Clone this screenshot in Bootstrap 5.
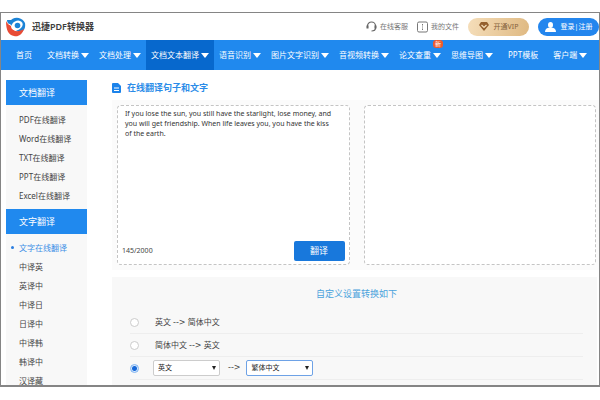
<!DOCTYPE html>
<html lang="zh-CN">
<head>
<meta charset="utf-8">
<meta name="viewport" content="width=device-width, initial-scale=1">
<title>迅捷PDF转换器</title>
<link href="https://cdn.jsdelivr.net/npm/bootstrap@5.3.0/dist/css/bootstrap.min.css" rel="stylesheet">
<style>
body{font-family:"Noto Sans","Noto Sans CJK SC",sans-serif;font-size:8px;line-height:10px;color:#444;background:#fff}
a{color:inherit;text-decoration:none}
svg{display:block;flex:none}
.page-wrap{height:100vh;padding:12px 0 13px}
.frame{border:1px solid #858585;border-bottom-width:2px}
.topbar{height:27px;padding-left:5px}
.brand{font-size:9px;font-weight:600;color:#3d3d3d;gap:6px}
.tool-links{gap:9px;color:#777;font-size:7px}
.tool-links a{gap:3px}
.tool-links .pill{height:18px;border-radius:9px;width:61px;gap:5px}
.tool-links .vip{background:linear-gradient(100deg,#f5deba,#dfb982);color:#85613c}
.tool-links .signin{background:#2386ee;color:#fff;border-radius:9px}
.mainnav{background:#2089ee;color:#fff;height:30px;padding-left:5px}
.mainnav a{padding:0 5px;gap:2px}
.mainnav a.wide{padding:0 10px}
.mainnav a.current{background:#0768cd}
.tri::after{content:"";border:4px solid transparent;border-top:5px solid #fff;border-bottom:0}
.hot{position:absolute;top:0;right:3px;background:#ee5a2c;border-radius:3px;font-size:6px;line-height:8px;padding:0 2px}
.main-row{padding-left:5px;gap:25px}
.side{width:81px;margin-top:10px;background:#f8f8f8}
.side h2{font-size:9px;line-height:25px;font-weight:400;color:#fff;background:#2089ee;padding-left:13px;margin:0}
.side ul{line-height:19px;padding:5px 0 4px 13px}
.side ul.second{padding-top:4px}
.side .chosen{color:#3d8fe6}
.side .chosen::before{content:"";position:absolute;left:-8px;top:8px;width:3px;height:3px;border-radius:50%;background:#2a7de0}
.work{min-width:0}
.work h1{font-size:9px;line-height:12px;font-weight:600;color:#2b8ce8;gap:6px;margin:12px 0 6px}
.panes{background:#fbfbfb;padding:5px 3px 5px 5px;gap:14px}
.pane{border:1px dashed #c4c4c4;border-radius:4px;background:#fff;height:160px}
.pane textarea{border:0;outline:0;resize:none;background:transparent;color:#333;font-size:7px;line-height:10px;padding:3px 14px 0 7px;width:100%}
.count{font-size:7px}
.pane-foot{padding:0 4px 3px}
.go{background:#1878dc;color:#fff;font-size:9px;line-height:20px;width:51px;padding:0;border:0;border-radius:2px}
.options{background:#f8f8f8;margin:7px 2px 0 0;padding:11px 14px 0 18px}
.options h3{font-size:9px;line-height:12px;color:#4ba3dc;font-weight:400;margin:0 0 11px}
.opt{height:23px;border-bottom:1px solid #eee;gap:14px}
.opt .form-check-input{width:9px;height:9px;margin:0;border-color:#ccc;background-image:none;background-color:#fff;box-shadow:none}
.opt .form-check-input:checked{border-color:#7fb4f2;background:radial-gradient(circle,#1668d8 0 2px,#d6e8fd 3px)}
.opt label{padding-left:2px}
.arrow{font-family:"DejaVu Sans",sans-serif;font-size:8px}
.opt .form-select{width:67px;height:16px;font-size:7px;line-height:10px;padding:0 4px;border:1px solid #ccc;border-radius:2px;color:#222;background-color:#fff;background-position:right 3px center;background-size:4px 4px;box-shadow:none;background-image:url("data:image/svg+xml,%3Csvg xmlns='http://www.w3.org/2000/svg' viewBox='0 0 4 4'%3E%3Cpath d='M0 0h4L2 4z' fill='%23222'/%3E%3C/svg%3E")}
.opt .form-select.active-select{border-color:#6ea2e6}
.pair{gap:6px}
</style>
</head>
<body>
<div class="page-wrap">
<div class="frame h-100 overflow-hidden d-flex flex-column">
  <header class="topbar d-flex align-items-center justify-content-between flex-shrink-0">
    <a href="#" class="brand d-flex align-items-center">
      <svg width="20" height="21" viewBox="0 0 20 21"><path d="M1 4 5 4A9 9 0 0 1 19 7C20 13 17 16 13 17L4 8C2 8 1 6 1 4Z" fill="#1c83d6"/><path d="M0 5C2 9 4 9 5 10C6 15 11 17 18 13C16 19 12 21 8 20C3 19 0 15 0 5Z" fill="#e84c36"/><ellipse cx="11" cy="9.500" rx="6" ry="4.500" transform="rotate(-28 11 9.500)" fill="#fff"/><circle cx="11.500" cy="9.500" r="2.800" fill="#1c83d6"/></svg>
      <span>迅捷PDF转换器</span>
    </a>
    <div class="tool-links d-flex align-items-center">
      <a href="#" class="d-flex align-items-center"><svg width="11" height="11" viewBox="0 0 11 11" fill="none" stroke="#666" stroke-width="1.200"><path d="M1.500 7V5a4 4 0 0 1 8 0v2c0 2-1.500 3-4 3"/><path d="M1.500 4.500v3M9.500 4.500v3" stroke-width="2"/></svg>在线客服</a>
      <a href="#" class="d-flex align-items-center"><svg width="11" height="12" viewBox="0 0 11 12" fill="none" stroke="#777"><rect x=".5" y="1" width="10" height="10" rx="1.500"/><path d="M5.500 3v1.500M5.500 5.500v1M5.500 7.500V9"/></svg>我的文件</a>
      <a href="#" class="pill vip d-flex align-items-center justify-content-center"><svg width="10" height="9" viewBox="0 0 10 9"><path d="M2 0h6l2 3-5 6-5-6z" fill="#94602e"/><path d="m2.500 3 2.500 2.500L7.500 3" fill="none" stroke="#f5deba" stroke-width="1.200"/></svg>开通VIP</a>
      <a href="#" class="pill signin d-flex align-items-center justify-content-center"><svg width="11" height="10" viewBox="0 0 11 10" fill="#fff"><ellipse cx="5.500" cy="3" rx="2.500" ry="3"/><path d="M0 10c0-3 2-4 4-4.200h3C9 6 11 7 11 10z"/></svg>登录|注册</a>
    </div>
  </header>
  <nav class="mainnav d-flex flex-shrink-0 text-nowrap">
    <a href="#" class="wide d-flex align-items-center">首页</a>
    <a href="#" class="tri d-flex align-items-center">文档转换</a>
    <a href="#" class="tri d-flex align-items-center">文档处理</a>
    <a href="#" class="tri current d-flex align-items-center">文档文本翻译</a>
    <a href="#" class="tri d-flex align-items-center">语音识别</a>
    <a href="#" class="tri d-flex align-items-center">图片文字识别</a>
    <a href="#" class="tri d-flex align-items-center">音视频转换</a>
    <a href="#" class="tri d-flex align-items-center position-relative">论文查重<span class="hot">新</span></a>
    <a href="#" class="tri d-flex align-items-center">思维导图</a>
    <a href="#" class="wide d-flex align-items-center">PPT模板</a>
    <a href="#" class="tri d-flex align-items-center">客户端</a>
  </nav>
  <div class="main-row d-flex flex-grow-1">
    <aside class="side flex-shrink-0">
      <h2>文档翻译</h2>
      <ul class="list-unstyled mb-0">
        <li><a href="#">PDF在线翻译</a></li><li><a href="#">Word在线翻译</a></li><li><a href="#">TXT在线翻译</a></li><li><a href="#">PPT在线翻译</a></li><li><a href="#">Excel在线翻译</a></li>
      </ul>
      <h2>文字翻译</h2>
      <ul class="second list-unstyled mb-0">
        <li class="chosen position-relative"><a href="#">文字在线翻译</a></li><li><a href="#">中译英</a></li><li><a href="#">英译中</a></li><li><a href="#">中译日</a></li><li><a href="#">日译中</a></li><li><a href="#">中译韩</a></li><li><a href="#">韩译中</a></li><li><a href="#">汉译藏</a></li>
      </ul>
    </aside>
    <main class="work flex-grow-1 d-flex flex-column">
      <h1 class="d-flex align-items-center"><svg width="9" height="10" viewBox="0 0 9 10"><path d="M1 0h5l3 3v6a1 1 0 0 1-1 1H1a1 1 0 0 1-1-1V1a1 1 0 0 1 1-1z" fill="#1c83ea"/><path d="M2 5h5M2 7.500h5" stroke="#fff"/></svg>在线翻译句子和文字</h1>
      <div class="panes d-flex">
        <div class="pane d-flex flex-column w-50">
          <textarea class="flex-grow-1" aria-label="原文">If you lose the sun, you still have the starlight, lose money, and you will get friendship. When life leaves you, you have the kiss of the earth.</textarea>
          <div class="pane-foot d-flex align-items-center justify-content-between"><span class="count">145/2000</span><button type="button" class="go">翻译</button></div>
        </div>
        <div class="pane w-50"></div>
      </div>
      <section class="options flex-grow-1">
        <h3 class="text-center">自定义设置转换如下</h3>
        <div class="opt d-flex align-items-center"><input class="form-check-input" type="radio" name="dir" id="d1"><label for="d1">英文 <span class="arrow">--&gt;</span> 简体中文</label></div>
        <div class="opt d-flex align-items-center"><input class="form-check-input" type="radio" name="dir" id="d2"><label for="d2">简体中文 <span class="arrow">--&gt;</span> 英文</label></div>
        <div class="opt d-flex align-items-center"><input class="form-check-input" type="radio" name="dir" id="d3" aria-label="自定义" checked>
          <div class="pair d-flex align-items-center"><select class="form-select" aria-label="源语言"><option>英文</option></select><label for="d3" class="arrow">--&gt;</label><select class="form-select active-select" aria-label="目标语言"><option>繁体中文</option></select></div></div>
      </section>
    </main>
  </div>
</div>
</div>
<script src="https://cdn.jsdelivr.net/npm/bootstrap@5.3.0/dist/js/bootstrap.bundle.min.js"></script>
</body>
</html>
